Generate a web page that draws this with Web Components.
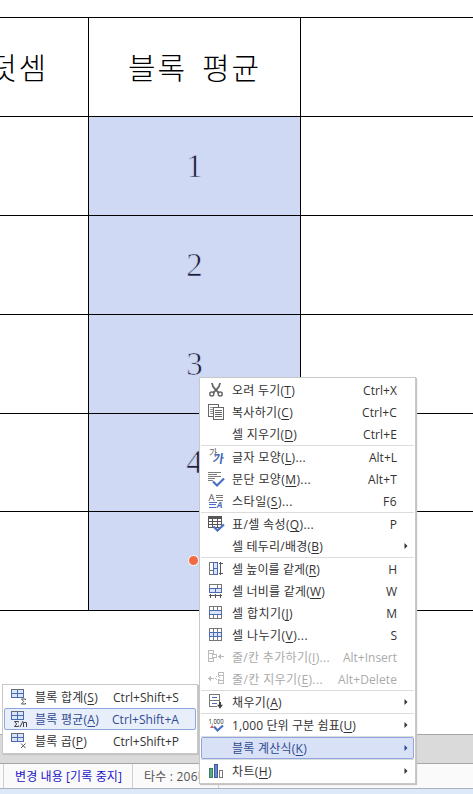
<!DOCTYPE html>
<html lang="ko">
<head>
<meta charset="utf-8">
<title>블록 계산식</title>
<style>
html, body {
    margin: 0;
    height: 100%;
    overflow: hidden;
    background: #fff;
}
</style>
</head>
<body>
<editor-window>
    <sheet-table slot="page">
        <sheet-row height="99">
            <sheet-cell side="left" head>덧셈</sheet-cell>
            <sheet-cell side="mid" head>블록 평균</sheet-cell>
            <sheet-cell></sheet-cell>
        </sheet-row>
        <sheet-row height="99">
            <sheet-cell side="left"></sheet-cell>
            <sheet-cell side="mid" selected>1</sheet-cell>
            <sheet-cell></sheet-cell>
        </sheet-row>
        <sheet-row height="99">
            <sheet-cell side="left"></sheet-cell>
            <sheet-cell side="mid" selected>2</sheet-cell>
            <sheet-cell></sheet-cell>
        </sheet-row>
        <sheet-row height="99">
            <sheet-cell side="left"></sheet-cell>
            <sheet-cell side="mid" selected>3</sheet-cell>
            <sheet-cell></sheet-cell>
        </sheet-row>
        <sheet-row height="98">
            <sheet-cell side="left"></sheet-cell>
            <sheet-cell side="mid" selected>4</sheet-cell>
            <sheet-cell></sheet-cell>
        </sheet-row>
        <sheet-row height="99">
            <sheet-cell side="left"></sheet-cell>
            <sheet-cell side="mid" selected><cell-marker></cell-marker></sheet-cell>
            <sheet-cell></sheet-cell>
        </sheet-row>
    </sheet-table>

    <status-bar slot="status"></status-bar>

    <context-menu slot="menus" style="left:199px; top:377px; width:215px">
        <menu-item icon="cut" w="63" keys="Ctrl+X" kw="34">오려 두기(<u>T</u>)</menu-item>
        <menu-item icon="copy" w="61" keys="Ctrl+C" kw="35">복사하기(<u>C</u>)</menu-item>
        <menu-item w="65" keys="Ctrl+E" kw="34">셀 지우기(<u>D</u>)</menu-item>
        <menu-line></menu-line>
        <menu-item icon="char" w="74" keys="Alt+L" kw="28">글자 모양(<u>L</u>)...</menu-item>
        <menu-item icon="para" w="79" keys="Alt+T" kw="29">문단 모양(<u>M</u>)...</menu-item>
        <menu-item icon="style" w="61" keys="F6" kw="14">스타일(<u>S</u>)...</menu-item>
        <menu-line></menu-line>
        <menu-item icon="table" w="82" keys="P">표/셀 속성(<u>Q</u>)...</menu-item>
        <menu-item w="91" more>셀 테두리/배경(<u>B</u>)</menu-item>
        <menu-line></menu-line>
        <menu-item icon="height" w="88" keys="H">셀 높이를 같게(<u>R</u>)</menu-item>
        <menu-item icon="width" w="93" keys="W">셀 너비를 같게(<u>W</u>)</menu-item>
        <menu-item icon="merge" w="61" keys="M">셀 합치기(<u>J</u>)</menu-item>
        <menu-item icon="split" w="76" keys="S">셀 나누기(<u>V</u>)...</menu-item>
        <menu-item icon="add" w="98" keys="Alt+Insert" kw="54" disabled>줄/칸 추가하기(<u>I</u>)...</menu-item>
        <menu-item icon="remove" w="91" keys="Alt+Delete" kw="59" disabled>줄/칸 지우기(<u>E</u>)...</menu-item>
        <menu-line></menu-line>
        <menu-item icon="fill" w="50" more>채우기(<u>A</u>)</menu-item>
        <menu-line></menu-line>
        <menu-item icon="comma" w="124" more>1,000 단위 구분 쉼표(<u>U</u>)</menu-item>
        <menu-line></menu-line>
        <menu-item w="75" more active>블록 계산식(<u>K</u>)</menu-item>
        <menu-line></menu-line>
        <menu-item icon="chart" w="40" more>차트(<u>H</u>)</menu-item>
    </context-menu>

    <context-menu slot="menus" style="left:2px; top:684px; width:194px">
        <menu-item sub icon="sum" w="63" keys="Ctrl+Shift+S" kw="66">블록 합계(<u>S</u>)</menu-item>
        <menu-item sub icon="avg" w="64" keys="Ctrl+Shift+A" kw="67" active>블록 평균(<u>A</u>)</menu-item>
        <menu-item sub icon="mul" w="52" keys="Ctrl+Shift+P" kw="66">블록 곱(<u>P</u>)</menu-item>
    </context-menu>
</editor-window>

<script>
const FONT = '"Open Sans", "Noto Sans CJK KR", sans-serif';

const GRID = `
    <path d="M1.5 1.5h12v8h-12z" fill="#dce5f8" stroke="#4a6ab4"/>
    <path d="M7.5 1v9M1 5.5h13" fill="none" stroke="#4a6ab4"/>
    <path d="M1 1.5h13" stroke="#666b78"/>`;

const ICONS = {
    cut: `
        <g fill="none" stroke="#666" stroke-width="1.5">
            <path d="M5 2q.3 3.500 3 6l3.500 3.500M13 2q-.3 3.500-3 6l-3.500 3.500" stroke-width="1.8"/>
            <circle cx="4.800" cy="13" r="2"/>
            <circle cx="13.200" cy="13" r="2"/>
        </g>`,
    copy: `
        <g fill="#fff" stroke="#666" shape-rendering="crispEdges">
            <path d="M1.5 1.5h10v12h-10z"/>
            <path d="M3 4.5h7M3 6.5h4M3 8.5h4M3 10.5h4" stroke="#999"/>
            <path d="M6.5 4.5h10v12h-10z"/>
            <path d="M8 7.5h7M8 9.5h7M8 11.5h7M8 13.5h7"/>
        </g>`,
    char: `
        <text x="2" y="8.300" font-size="9" fill="#666">가</text>
        <text x="6" y="15.5" font-size="12" font-weight="700" fill="#4468b8" transform="skewX(-8) translate(1.500 0)">가</text>`,
    para: `
        <path d="M1 2.5h13M1 4.5h9M1 6.5h13M1 8.5h7M1 10.5h5" stroke="#7b7b7b" shape-rendering="crispEdges"/>
        <path d="M6 11.5l4 4 7-7" fill="none" stroke="#4a6fc0" stroke-width="2.2"/>`,
    style: `
        <text x="1.500" y="9" font-size="9.500" fill="#555">A</text>
        <path d="M9 3.5h7M9 5.5h7M10 8.5h6" stroke="#777" shape-rendering="crispEdges"/>
        <path d="M2 10.5h8M2 12.5h7M2 15.5h7" stroke="#4a6fc0" shape-rendering="crispEdges"/>
        <text x="9.700" y="16" font-size="9" font-weight="700" font-style="italic" fill="#4a6fc0">A</text>`,
    table: `
        <g shape-rendering="crispEdges">
            <path d="M1.5 1.5h13v11h-13z" fill="#fff" stroke="#555"/>
            <path d="M1 1h14v3H1z" fill="#555"/>
            <path d="M5.5 3v10M10.5 3v10M1 6.5h14M1 9.5h14" stroke="#555"/>
        </g>
        <path d="M6.5 11.5l4 4 6.5-6" fill="none" stroke="#4a6fc0" stroke-width="2.2"/>`,
    height: `
        <g fill="none" shape-rendering="crispEdges">
            <path d="M6.5 2.5h-4v12h4M2 10.5h4" stroke="#777"/>
            <path d="M6.5 2.5h4v12h-4z" fill="#dce5f8" stroke="#4a6ab4"/>
            <path d="M6 8.5h5" stroke="#4a6ab4"/>
            <path d="M13.5 2v13M12 3.5h4M12 13.5h4" stroke="#555"/>
        </g>`,
    width: `
        <g fill="none" shape-rendering="crispEdges">
            <path d="M2.5 6V2.5h12V6M10.5 2v4" stroke="#777"/>
            <path d="M2.5 6.5h12v4h-12z" fill="#dce5f8" stroke="#4a6ab4"/>
            <path d="M8.5 6v5" stroke="#4a6ab4"/>
            <path d="M2 13.5h13M3.5 12v4M8.5 12v4M13.5 12v4" stroke="#555"/>
        </g>`,
    merge: `
        <g fill="none" shape-rendering="crispEdges">
            <path d="M2.5 2.5h12v12h-12zM6.5 2v13M10.5 2v13" stroke="#777"/>
            <path d="M2.5 6.5h12v4h-12z" fill="#dce5f8" stroke="#4a6ab4"/>
        </g>`,
    split: `
        <g fill="none" shape-rendering="crispEdges">
            <path d="M2.5 2.5h12v12h-12zM6.5 2v13M10.5 2v13" stroke="#777"/>
            <path d="M2.5 6.5h12v4h-12z" fill="#dce5f8" stroke="#4a6ab4"/>
            <path d="M6.5 6v5M10.5 6v5" stroke="#4a6ab4"/>
        </g>`,
    add: `
        <g fill="none" stroke="#bcbcbc" shape-rendering="crispEdges">
            <path d="M1.5 2.5h5v3h-5zM1.5 10.5h5v3h-5zM1.5 5v5M5.5 6.5h4v3h-4z"/>
            <path d="M11 8.5h6M12.5 7v3M13.5 6v5"/>
        </g>`,
    remove: `
        <g fill="none" stroke="#bcbcbc" shape-rendering="crispEdges">
            <path d="M11.5 2.5h5v3h-5zM11.5 10.5h5v3h-5zM16.5 5v5"/>
            <path d="M8.5 6.5h4v3h-4z" stroke-dasharray="1 1"/>
            <path d="M1 8.5h6M2.5 7v3M3.5 6v5"/>
        </g>`,
    fill: `
        <g fill="none" shape-rendering="crispEdges">
            <path d="M2.5 1.5h10v12h-10zM2 7.5h11" stroke="#777"/>
            <path d="M5 4.5h5M5 10.5h5" stroke="#4a6ab4"/>
            <path d="M10 9h6v7h-6z" fill="#fff"/>
            <path d="M12 9h2v4h-2z" fill="#444"/>
        </g>
        <path d="M10 11.8h6l-3 4z" fill="#444"/>`,
    comma: `
        <text x="1.500" y="7.500" font-size="7" textLength="15" lengthAdjust="spacingAndGlyphs" fill="#222">1,000</text>
        <path d="M3 12l2-3 2 3z" fill="#d9594e"/>
        <path d="M7 10.5l3.5 4 5.5-5" fill="none" stroke="#4a6fc0" stroke-width="2.2"/>`,
    chart: `
        <g shape-rendering="crispEdges">
            <path d="M2.5 6.5h3v9h-3z" fill="#55ab84" stroke="#3d7c63"/>
            <path d="M7.5 2.5h3v13h-3z" fill="#6a86cc" stroke="#3f5a9e"/>
            <path d="M12.5 8.5h3v7h-3z" fill="#fff" stroke="#777"/>
        </g>`,
    sum: `<g shape-rendering="crispEdges">${GRID}</g>
        <path d="M15.5 12v-1h-4l2.2 2.500-2.200 2.500h4v-1" fill="none" stroke="#555"/>`,
    avg: `<g shape-rendering="crispEdges">${GRID}</g>
        <path d="M8.5 12.500v-1h-4l2.200 2.500-2.200 2.500h4v-1M13 11l-3 6M13.5 17v-4.500h3V17" fill="none" stroke="#444"/>`,
    mul: `<g shape-rendering="crispEdges">${GRID}</g>
        <path d="M11 11.500l4.500 4.500M15.500 11.500L11 16" fill="none" stroke="#555"/>`
};

// spread the letters of a run so that it takes the given width
function fitWidth(el, text, width) {
    if (!width) return;
    el.style.letterSpacing = '0px';
    const diff = width - el.getBoundingClientRect().width;
    el.style.letterSpacing = (diff / text.trim().length) + 'px';
}

class EditorWindow extends HTMLElement {
    constructor() {
        super();
        this.attachShadow({mode: 'open'}).innerHTML = `
        <style>
        :host {
            display: flex;
            flex-direction: column;
            position: relative;
            width: 473px;
            height: 794px;
            overflow: hidden;
            background: #fff;
        }
        .page {
            height: 717px;
            padding-top: 17px;
            flex: none;
        }
        .gutter {
            height: 28px;
            flex: none;
            border-top: 1px solid #a6a6a6;
            border-bottom: 1px solid #a6a6a6;
            background: #dadada;
        }
        .desk {
            flex: 1;
            background: #dde9f8;
        }
        </style>
        <div class="page"><slot name="page"></slot></div>
        <div class="gutter"></div>
        <slot name="status"></slot>
        <div class="desk"></div>
        <slot name="menus"></slot>`;
    }
}

class SheetTable extends HTMLElement {
    constructor() {
        super();
        this.attachShadow({mode: 'open'}).innerHTML = `
        <style>
        :host {
            display: flex;
            flex-direction: column;
            border-top: 1px solid #000;
        }
        </style>
        <slot></slot>`;
    }
}

class SheetRow extends HTMLElement {
    constructor() {
        super();
        this.attachShadow({mode: 'open'}).innerHTML = `
        <style>
        :host {
            display: grid;
            grid-template-columns: 89px 212px 1fr;
            box-sizing: border-box;
            height: ${this.getAttribute('height')}px;
            border-bottom: 1px solid #000;
        }
        </style>
        <slot></slot>`;
    }
}

class SheetCell extends HTMLElement {
    constructor() {
        super();
        this.attachShadow({mode: 'open'}).innerHTML = `
        <style>
        :host {
            display: flex;
            align-items: center;
            justify-content: center;
            box-sizing: border-box;
            min-width: 0;
            overflow: hidden;
            white-space: nowrap;
            color: #1c1c3c;
            font: 33px/40px "Liberation Serif", serif;
        }
        :host([side]) {
            border-right: 1px solid #000;
        }
        /* thins the digits over the selection colour */
        :host([selected]) {
            padding-bottom: 1px;
            background: #cfd9f3;
            -webkit-text-stroke: 0.7px #cfd9f3;
        }
        :host([head]) {
            padding-bottom: 2px;
            color: #000;
            font: 300 30px/40px "Noto Sans CJK KR", sans-serif;
            letter-spacing: 1.8px;
            word-spacing: 5px;
        }
        :host([side=left]) {
            justify-content: flex-end;
            padding-right: 40px;
        }
        </style>
        <slot></slot>`;
    }
}

class CellMarker extends HTMLElement {
    constructor() {
        super();
        this.attachShadow({mode: 'open'}).innerHTML = `
        <style>
        :host {
            display: block;
            width: 9px;
            height: 9px;
            margin-right: 2px;
            border: 1px solid #fff;
            border-radius: 50%;
            background: #f26a43;
        }
        </style>`;
    }
}

class StatusBar extends HTMLElement {
    constructor() {
        super();
        this.attachShadow({mode: 'open'}).innerHTML = `
        <style>
        :host {
            display: flex;
            flex: none;
            height: 24px;
            padding-left: 3px;
            border-bottom: 1px solid #a9b3bf;
            background: #fafafa;
            font: 12px/25px ${FONT};
            white-space: nowrap;
        }
        div {
            box-sizing: border-box;
            border-left: 1px solid #d0d0d0;
            padding-left: 11px;
        }
        .track {
            width: 129px;
            color: #1a14c8;
        }
        .count {
            width: 86px;
            color: #555;
        }
        </style>
        <div class="track"><span>변경 내용 [기록 중지]</span></div>
        <div class="count"><span>타수 : 206타</span></div>
        <div></div>`;
    }

    connectedCallback() {
        const [track, count] = this.shadowRoot.querySelectorAll('span');
        fitWidth(track, track.textContent, 107);
        fitWidth(count, count.textContent, 65);
    }
}

class ContextMenu extends HTMLElement {
    constructor() {
        super();
        this.attachShadow({mode: 'open'}).innerHTML = `
        <style>
        :host {
            display: block;
            position: absolute;
            padding: 1px 0;
            border: 1px solid #c8c8c8;
            background: #fff;
            box-shadow: 1px 1px 1px #c4c4c4;
        }
        </style>
        <slot></slot>`;
    }
}

class MenuLine extends HTMLElement {
    constructor() {
        super();
        this.attachShadow({mode: 'open'}).innerHTML = `
        <style>
        :host {
            display: block;
            height: 1px;
            margin: 0 1px;
            background: #dcdcdc;
        }
        </style>`;
    }
}

class MenuItem extends HTMLElement {
    constructor() {
        super();
        this.attachShadow({mode: 'open'});
    }

    connectedCallback() {
        const sub = this.hasAttribute('sub');
        const keys = this.getAttribute('keys');
        const iconWidth = sub ? 20 : 18;
        this.shadowRoot.innerHTML = `
        <style>
        :host {
            display: flex;
            align-items: center;
            box-sizing: border-box;
            height: 22px;
            margin: 0 1px;
            padding: 0 16px 0 5px;
            border: 1px solid transparent;
            border-radius: 2px;
            color: #333;
            font: 12px/18px ${FONT};
            white-space: nowrap;
        }
        :host([active]) {
            border-color: #8fa5de;
            background: #d9e1f6;
            color: #2f4a90;
        }
        :host([active][sub]) {
            background: #e8eefa;
        }
        :host([disabled]) {
            color: #aaa;
        }
        :host([more]) {
            padding-right: 5px;
        }
        ::slotted(u) {
            text-decoration: underline;
            text-decoration-thickness: 1px;
            text-underline-offset: 2px;
        }
        .icon {
            flex: none;
            margin-right: ${sub ? 5 : 7}px;
        }
        .label, .keys {
            padding-top: 2px;
        }
        .keys {
            margin-left: auto;
        }
        .arrow {
            margin-left: auto;
            fill: currentColor;
        }
        </style>
        <svg class="icon" width="${iconWidth}" height="18" viewBox="0 0 ${iconWidth} 18">${ICONS[this.getAttribute('icon')] || ''}</svg>
        <span class="label"><slot></slot></span>
        ${keys ? `<span class="keys">${keys}</span>` : ''}
        ${this.hasAttribute('more') ? '<svg class="arrow" width="4" height="6"><path d="M0.5 0L3.5 3L0.5 6z"/></svg>' : ''}`;

        fitWidth(this.shadowRoot.querySelector('.label'), this.textContent, +this.getAttribute('w'));
        if (keys) {
            fitWidth(this.shadowRoot.querySelector('.keys'), keys, +this.getAttribute('kw'));
        }
    }
}

customElements.define('editor-window', EditorWindow);
customElements.define('sheet-table', SheetTable);
customElements.define('sheet-row', SheetRow);
customElements.define('sheet-cell', SheetCell);
customElements.define('cell-marker', CellMarker);
customElements.define('status-bar', StatusBar);
customElements.define('context-menu', ContextMenu);
customElements.define('menu-line', MenuLine);
customElements.define('menu-item', MenuItem);
</script>
</body>
</html>
